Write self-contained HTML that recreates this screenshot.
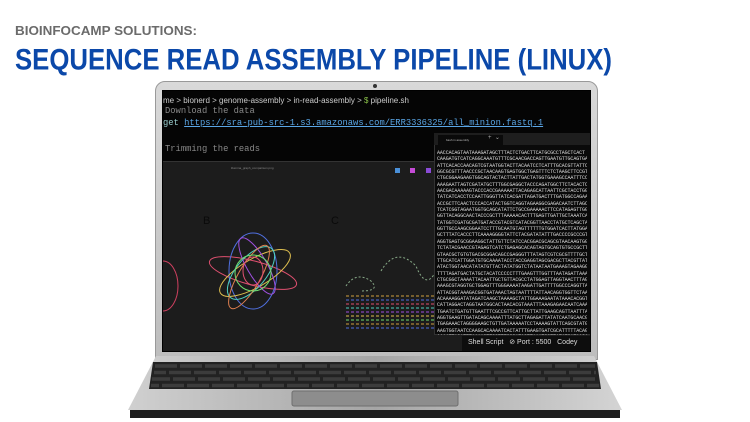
<!DOCTYPE html>
<html><head><meta charset="utf-8"><style>
*{margin:0;padding:0;box-sizing:border-box}
body{width:750px;height:422px;background:#fff;position:relative;overflow:hidden;font-family:"Liberation Sans",sans-serif}
.abs{position:absolute}
.mono{font-family:"Liberation Mono",monospace}
#dna{position:absolute;left:437px;top:150px;width:150px;height:185px;overflow:hidden;font-family:"Liberation Mono",monospace;font-size:5px;line-height:6.35px;color:#ddd;white-space:pre;letter-spacing:-0.1px}
</style></head><body>
<svg class="abs" style="left:0;top:0" width="750" height="90">
<text x="15" y="35" font-family="Liberation Sans" font-weight="bold" font-size="12.5" fill="#6b6b6b" textLength="182" lengthAdjust="spacingAndGlyphs">BIOINFOCAMP SOLUTIONS:</text>
<text x="15" y="69.5" font-family="Liberation Sans" font-weight="bold" font-size="30" fill="#0b48a9" textLength="597" lengthAdjust="spacingAndGlyphs">SEQUENCE READ ASSEMBLY PIPELINE (LINUX)</text>
</svg>

<div class="abs" style="left:155px;top:81px;width:443px;height:279px;background:linear-gradient(#d9d9d9,#bdbdbd);border-radius:10px 10px 0 0;border:1px solid #999"></div>
<div class="abs" style="left:162px;top:90px;width:429px;height:262px;background:#000"></div>
<div class="abs" style="left:373px;top:84px;width:4px;height:4px;border-radius:50%;background:#333"></div>

<svg class="abs" style="left:120px;top:356px" width="510" height="66">
<defs><linearGradient id="g" x1="0" x2="1"><stop offset="0" stop-color="#d0d0d0"/><stop offset=".5" stop-color="#a5a5a5"/><stop offset="1" stop-color="#d4d4d4"/></linearGradient></defs>
<polygon points="36,0 474,0 502,54 8,54" fill="url(#g)"/>
<polygon points="33,6 477,6 481,33 29,33" fill="#222"/>
<g stroke="#3c3c3c" stroke-width="3.5" stroke-dasharray="22 3">
<line x1="35" y1="10" x2="475" y2="10"/>
<line x1="34" y1="16.5" x2="476" y2="16.5" stroke-dashoffset="10"/>
<line x1="32" y1="23" x2="478" y2="23" stroke-dashoffset="4"/>
<line x1="31" y1="29.5" x2="479" y2="29.5" stroke-dashoffset="14"/>
</g>
<rect x="172" y="35" width="166" height="15" rx="2" fill="#8d8d8d" stroke="#6e6e6e"/>
<rect x="10" y="54" width="490" height="8" fill="#1e1e1e"/>
</svg>

<div class="abs" style="left:163px;top:91px;width:427px;height:260px;background:#050505;overflow:hidden">
 <div class="abs" style="left:0;top:70px;width:427px;height:190px;background:#1c1c1c"></div>
 <div class="abs" style="left:0;top:70px;width:427px;height:1px;background:#333"></div>
 <div class="abs" style="left:0;top:5px;font-size:8px;color:#ccc;white-space:nowrap">me &gt; bionerd &gt; genome-assembly &gt; in-read-assembly &gt; <span style="color:#8bc34a">$</span> pipeline.sh</div>
 <div class="abs mono" style="left:2px;top:15px;font-size:8.8px;color:#888;white-space:nowrap">Download the data</div>
 <div class="abs mono" style="left:0;top:27px;font-size:8.8px;color:#9cc;white-space:nowrap">get <span style="color:#5aa6e6;text-decoration:underline">https://sra-pub-src-1.s3.amazonaws.com/ERR3336325/all_minion.fastq.1</span></div>
 <div class="abs mono" style="left:2px;top:53px;font-size:8.8px;color:#888;white-space:nowrap">Trimming the reads</div>
 <div class="abs" style="left:68px;top:75px;font-size:3px;color:#888">illumina_graph_comparison.png</div>
 <div class="abs" style="left:232px;top:77px;width:5px;height:5px;background:#4a90d9"></div>
 <div class="abs" style="left:247px;top:77px;width:5px;height:5px;background:#c54bd6"></div>
 <div class="abs" style="left:263px;top:77px;width:5px;height:5px;background:#8a4bd6"></div>
 <div class="abs" style="left:277px;top:77px;width:5px;height:5px;background:#3b8ad9"></div>
 <div class="abs" style="left:40px;top:124px;font-size:11px;color:#0a0a0a">B</div>
 <div class="abs" style="left:168px;top:124px;font-size:11px;color:#0a0a0a">C</div>
 <svg class="abs" style="left:0;top:120px" width="290" height="130" fill="none" stroke-width="1">
  <ellipse cx="90" cy="62" rx="45" ry="12" stroke="#e05070" transform="rotate(15 90 62)"/>
  <ellipse cx="90" cy="60" rx="24" ry="38" stroke="#5070e0"/>
  <ellipse cx="92" cy="62" rx="40" ry="14" stroke="#e0c050" transform="rotate(-30 92 62)"/>
  <ellipse cx="88" cy="62" rx="15" ry="32" stroke="#50d0c0" transform="rotate(40 88 62)"/>
  <ellipse cx="94" cy="55" rx="32" ry="10" stroke="#a050e0" transform="rotate(60 94 55)"/>
  <ellipse cx="86" cy="66" rx="36" ry="11" stroke="#e08050" transform="rotate(-60 86 66)"/>
  <ellipse cx="90" cy="62" rx="18" ry="18" stroke="#70e070"/>
  <ellipse cx="90" cy="60" rx="10" ry="14" stroke="#e05070"/>
  <ellipse cx="0" cy="75" rx="15" ry="25" stroke="#d04060"/>
  <path d="M183 75 q10 -15 25 -5 q10 10 -10 10 M218 60 q15 -25 35 -5 q10 25 20 5" stroke="#8a8" stroke-dasharray="2 2"/>
  <g stroke-dasharray="3 2">
  <path d="M183 85 h95" stroke="#d0a040"/><path d="M183 89 h95" stroke="#5070e0"/><path d="M183 93 h95" stroke="#e05070"/>
  <path d="M183 97 h95" stroke="#50d0c0"/><path d="M183 101 h95" stroke="#a050e0"/><path d="M183 105 h95" stroke="#e0c050"/>
  <path d="M183 109 h95" stroke="#70e070"/><path d="M183 113 h95" stroke="#d0a040"/><path d="M183 117 h95" stroke="#5070e0"/>
  </g>
 </svg>
 <div class="abs" style="left:271px;top:42px;width:160px;height:202px;background:#0a0a0a;border:1px solid #333"></div>
 <div class="abs" style="left:271px;top:42px;width:160px;height:12px;background:#1e1e1e"></div>
 <div class="abs" style="left:275px;top:44px;width:65px;height:10px;background:#0a0a0a;font-size:3px;color:#bbb;padding:3px 0 0 8px">bash in assembly</div>
 <div class="abs" style="left:325px;top:43px;font-size:6px;color:#aaa">+ &nbsp;⌄</div>
 <div class="abs" style="left:299px;top:245px;width:128px;height:15px;background:#0d0d0d;font-size:7px;color:#ddd;white-space:nowrap;padding:2px 0 0 6px">Shell Script &nbsp;&nbsp;⊘ Port : 5500 &nbsp;&nbsp;Codey</div>
</div>
<div id="dna">AACCACAGTAATAAAGATAGCTTTACTCTGACTTCATGCGCCTAGCTCACT
CAAGATGTCATCAGGCAAATGTTTCGCAACGACCAGTTGAATGTTGCAGTGA
ATTCACACCAACAGTCGTAATGGTACTTACAATCCTCATTTGCACGTTATTC
GGCGCGTTTAACCCGCTAACAAGTGAGTGGCTGAGTTTCTCTAAGCTTCCGT
CTGCGGAAGAAGTGGCAGTACTACTTATTGACTATGGTGAAAGCCAATTTCC
AAAGAATTAGTCGATATGCTTTGGCGAGGCTACCCAGATGGCTTCTACACTC
AACGACAAAAAGTACCCACCGAAAAATTACAGAGCATTAATTCGCTACCTGG
TATCATCACCTCCAATTGGGTTATCACGATTAGATGACTTTGATGGCCAGAA
ACCGCTTCAACTCCCACCATACTGGTCAGGTAGAAGGCGAGACAATCTTAGC
TCATCGGTAGAATGGTGCAGCATATTCTGCCGAAAAACTTCCATAGAGTTGG
GGTTACAGGCAACTACCCGCTTTAAAAACACTTTGAGTTGATTGCTAAATCA
TATGGTCGATGCGATGATACCGTACGTCATACGGTTAACCTATGCTCAGCTA
GGTTGCCAAGCGGAATCCTTTGCAATGTAGTTTTTTGTGGATCACTTATGGA
GCTTTATCACCCTTCAAAAGGGGTATTCTACGATATATTTGACCCCGCCCGT
AGGTGAGTGCGGAAGGCTATTGTTCTATCCACGGACGCAGCGTAACAAGTGG
TCTATACGAACCGTAGAGTCATCTGAGAGCACAGTAGTGCAGTGTGCCGCTT
GTAACGCTGTGTGACGCGGACAGCCGAGGGTTTATAGTCGTCGCGTTTTGCT
TTGCATCATTGGATGTGCAAAATACCTACCGAGGTAGCGACGCTTACGTTAT
ATACTGGTAACATATATGTTACTATATGGTCTATAATAATGAAAGTAGAAGG
TTTTAGATGACTATGCTACATCCCCCTTTGAAGTTTGGTTTAATAGATTAAA
CTGCGGCTAAAATTACAATTGCTGTTACGCCTATGGAGTTAGGTAACTTTAG
AAAGCGTAGGTGCTGGAGTTTGGGAAAATAAGATTGATTTTGGCCCAGGTTA
ATTACGGTAAAGACGGTGATAAACTAGTAATTTTATTAACAGGTGGTTCTAA
ACAAAAGGATATAGATCAAGCTAAAAGCTATTGGAAAGAATATAAACACGGT
CATTAGGACTAGGTAATGGCACTAACACGTAAATTTAAAGAGAACAATCAAA
TGAATCTGATGTTGAATTTCGCCGTTCATTGCTTATTGAAGCAGTTAATTTA
AGGTGAAGTTGATACAGCAAAATTTATGCTTAGAGATTATATCAATGCAACG
TGAGAAACTAGGGGAAGCTGTTGATAAAAATCCTAAAAGTATTCAGCGTATG
AAGTGGTAATCCAAGCACAAAATCACTATTTGAAGTGATCGCATTTTTACAG
AAAATTACATTTAAAAGTTGGTTTGGCATAGTTAAATGGTTATATCATAACA</div>
</body></html>
